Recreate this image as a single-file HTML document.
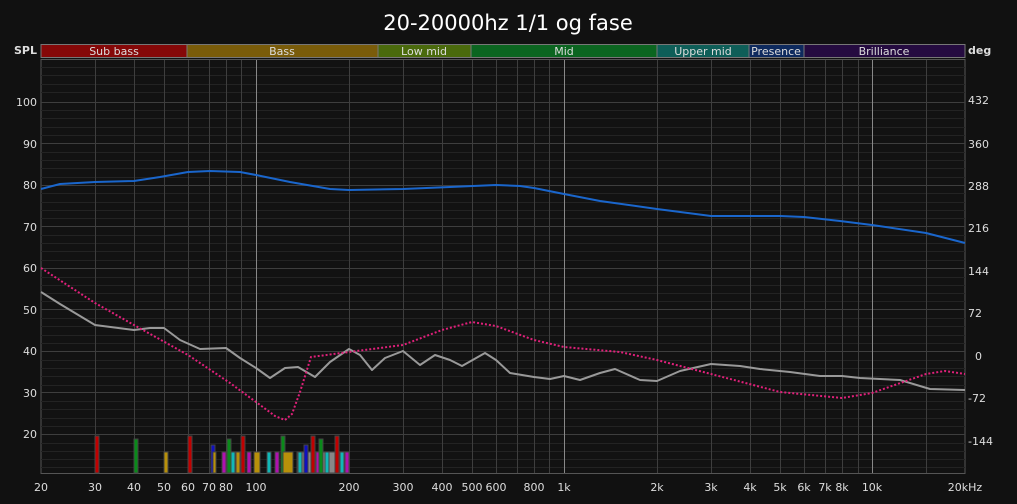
<!DOCTYPE html><html><head><meta charset="utf-8"><style>
body{margin:0;background:#111;width:1017px;height:499px;overflow:hidden;font-family:"Liberation Sans","DejaVu Sans",sans-serif}
</style></head><body>
<svg width="1017" height="499" xmlns="http://www.w3.org/2000/svg" font-family="DejaVu Sans, Liberation Sans, sans-serif">
<rect width="1017" height="499" fill="#111"/>
<text x="508" y="30" fill="#fff" font-size="21" text-anchor="middle">20-20000hz 1/1 og fase</text>
<g font-size="11" fill="#ddd" stroke="#777" stroke-width="1">
<rect x="41" y="44.5" width="146" height="13" fill="#850808"/>
<rect x="187" y="44.5" width="191" height="13" fill="#7a5c0a"/>
<rect x="378" y="44.5" width="93" height="13" fill="#4a6a0c"/>
<rect x="471" y="44.5" width="186" height="13" fill="#0b6520"/>
<rect x="657" y="44.5" width="92" height="13" fill="#0e5e58"/>
<rect x="749" y="44.5" width="55" height="13" fill="#0e2a5e"/>
<rect x="804" y="44.5" width="161" height="13" fill="#250b40"/>
</g>
<g font-size="11" fill="#ddd" text-anchor="middle">
<text x="114" y="55">Sub bass</text><text x="282" y="55">Bass</text><text x="424" y="55">Low mid</text><text x="564" y="55">Mid</text><text x="703" y="55">Upper mid</text><text x="776" y="55">Presence</text><text x="884" y="55">Brilliance</text>
</g>
<text x="37" y="54" fill="#ddd" font-size="11" font-weight="bold" text-anchor="end">SPL</text>
<text x="968" y="54" fill="#ddd" font-size="11" font-weight="bold">deg</text>
<rect x="41" y="59.5" width="924" height="414" fill="#121212" stroke="#555"/>
<g stroke="#232323" stroke-width="1">
<path d="M41 67.5H965M41 75.5H965M41 84.5H965M41 92.5H965M41 110.5H965M41 118.5H965M41 127.5H965M41 135.5H965M41 152.5H965M41 160.5H965M41 168.5H965M41 177.5H965M41 193.5H965M41 202.5H965M41 210.5H965M41 218.5H965M41 235.5H965M41 243.5H965M41 251.5H965M41 260.5H965M41 277.5H965M41 285.5H965M41 293.5H965M41 301.5H965M41 318.5H965M41 326.5H965M41 335.5H965M41 343.5H965M41 360.5H965M41 368.5H965M41 376.5H965M41 385.5H965M41 401.5H965M41 409.5H965M41 418.5H965M41 426.5H965M41 443.5H965M41 451.5H965M41 459.5H965M41 467.5H965"/>
</g>
<g stroke="#3e3e3e" stroke-width="1">
<path d="M41 102.5H965M41 143.5H965M41 185.5H965M41 226.5H965M41 268.5H965M41 309.5H965M41 351.5H965M41 392.5H965M41 434.5H965"/>
<path d="M95.5 60V473M134.5 60V473M164.5 60V473M188.5 60V473M209.5 60V473M226.5 60V473M241.5 60V473M349.5 60V473M403.5 60V473M442.5 60V473M472.5 60V473M496.5 60V473M517.5 60V473M534.5 60V473M549.5 60V473M657.5 60V473M711.5 60V473M750.5 60V473M780.5 60V473M804.5 60V473M825.5 60V473M842.5 60V473M858.5 60V473M926.5 60V473"/>
</g>
<path d="M256.5 60V473M564.5 60V473M872.5 60V473" stroke="#888"/>
<g font-size="11" fill="#ddd" text-anchor="end">
<text x="37" y="106">100</text><text x="37" y="148">90</text><text x="37" y="189">80</text><text x="37" y="231">70</text><text x="37" y="272">60</text><text x="37" y="314">50</text><text x="37" y="355">40</text><text x="37" y="397">30</text><text x="37" y="438">20</text>
</g>
<g font-size="11" fill="#ddd">
<text x="968" y="104">432</text><text x="968" y="148">360</text><text x="968" y="190">288</text><text x="968" y="232">216</text><text x="968" y="275">144</text><text x="968" y="317">72</text><text x="975" y="360">0</text><text x="968" y="402">-72</text><text x="968" y="445">-144</text>
</g>
<g font-size="11" fill="#ddd" text-anchor="middle">
<text x="41" y="491">20</text><text x="95" y="491">30</text><text x="134" y="491">40</text><text x="164" y="491">50</text><text x="188" y="491">60</text><text x="209" y="491">70</text><text x="226" y="491">80</text><text x="256" y="491">100</text><text x="349" y="491">200</text><text x="403" y="491">300</text><text x="442" y="491">400</text><text x="472" y="491">500</text><text x="496" y="491">600</text><text x="534" y="491">800</text><text x="564" y="491">1k</text><text x="657" y="491">2k</text><text x="711" y="491">3k</text><text x="750" y="491">4k</text><text x="780" y="491">5k</text><text x="804" y="491">6k</text><text x="825" y="491">7k</text><text x="842" y="491">8k</text><text x="872" y="491">10k</text><text x="965" y="491">20kHz</text>
</g>
<g stroke="#444" stroke-width="1">
<rect x="95" y="436" width="4" height="37" fill="#c00000"/>
<rect x="134" y="439" width="4" height="34" fill="#0a8a1a"/>
<rect x="164" y="452" width="4" height="21" fill="#b8900a"/>
<rect x="188" y="436" width="4" height="37" fill="#c00000"/>
<rect x="211" y="445" width="4" height="28" fill="#1010c0"/>
<rect x="213" y="452" width="3" height="21" fill="#b8900a"/>
<rect x="222" y="452" width="4" height="21" fill="#b010b0"/>
<rect x="227" y="439" width="4" height="34" fill="#0a8a1a"/>
<rect x="231" y="452" width="4" height="21" fill="#10b8b8"/>
<rect x="236" y="452" width="4" height="21" fill="#b8900a"/>
<rect x="241" y="436" width="4" height="37" fill="#c00000"/>
<rect x="247" y="452" width="4" height="21" fill="#b010b0"/>
<rect x="254" y="452" width="6" height="21" fill="#b8900a"/>
<rect x="267" y="452" width="4" height="21" fill="#10b8b8"/>
<rect x="275" y="452" width="4" height="21" fill="#b010b0"/>
<rect x="281" y="436" width="4" height="37" fill="#0a8a1a"/>
<rect x="283" y="452" width="10" height="21" fill="#b8900a"/>
<rect x="297" y="452" width="50" height="21" fill="#888"/>
<rect x="298" y="452" width="4" height="21" fill="#10b8b8"/>
<rect x="304" y="445" width="4" height="28" fill="#1010c0"/>
<rect x="311" y="436" width="4" height="37" fill="#c00000"/>
<rect x="316" y="452" width="4" height="21" fill="#b010b0"/>
<rect x="319" y="439" width="4" height="34" fill="#0a8a1a"/>
<rect x="325" y="452" width="4" height="21" fill="#10b8b8"/>
<rect x="335" y="436" width="4" height="37" fill="#c00000"/>
<rect x="340" y="452" width="4" height="21" fill="#10b8b8"/>
<rect x="345" y="452" width="4" height="21" fill="#b010b0"/>
</g>
<polyline fill="none" stroke="#999" stroke-width="2" stroke-linejoin="round" points="41,292 60,304 95,325 134,330 150,328 164,328 180,340 200,349 226,348 240,358 256,368 270,378 285,368 298,367 315,377 330,362 349,349 360,355 372,370 385,358 403,351 420,365 435,355 450,360 462,366 485,353 496,360 510,373 534,377 550,379 564,376 580,380 600,373 615,369 640,380 657,381 680,371 711,364 740,366 760,369 790,372 820,376 842,376 860,378 900,380 930,389 965,390"/>
<polyline fill="none" stroke="#e0207a" stroke-width="2" stroke-dasharray="2 2" points="41,268 95,303 134,325 188,355 230,383 256,402 275,416 285,420 292,414 300,392 311,357 349,352 403,345 442,330 472,322 496,326 534,340 564,347 620,352 657,360 711,374 780,392 842,398 872,393 926,374 945,371 965,374"/>
<polyline fill="none" stroke="#1a66cc" stroke-width="2" stroke-linejoin="round" points="41,189 60,184 95,182 134,181 160,177 188,172 210,171 240,172 256,175 290,182 330,189 349,190 403,189 450,187 496,185 520,186 534,188 564,194 600,201 657,209 711,216 780,216 804,217 840,221 872,225 926,233 965,243"/>
</svg>
</body></html>
